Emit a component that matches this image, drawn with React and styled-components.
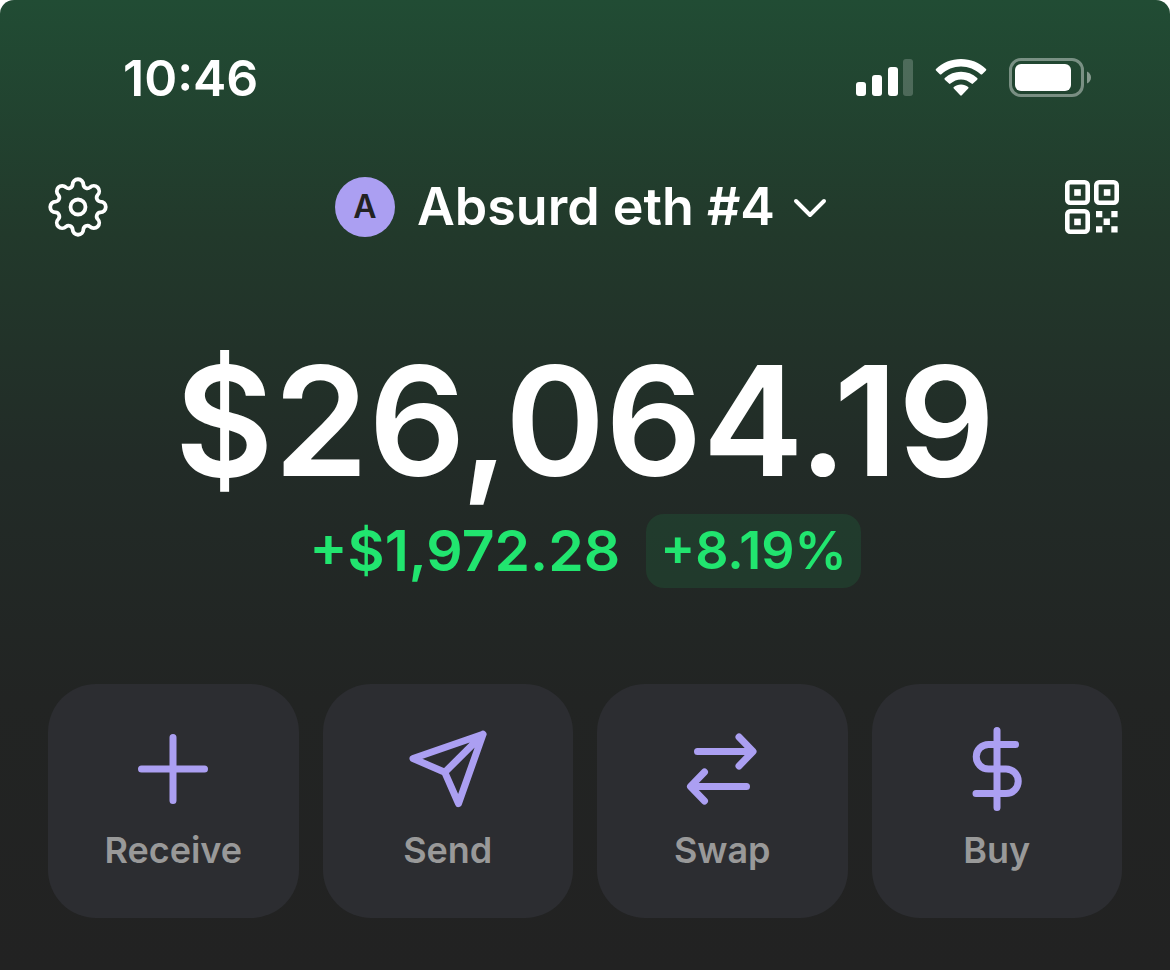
import React from "react";
import styled, { createGlobalStyle } from "styled-components";

const LILAC = "#ab9ff2";
const GREEN = "#21e56f";

// eight rounded teeth, each one tooth arc followed by one valley arc
const gearPath = () => {
  const radius = 23;
  const half = 13.57;
  const point = (deg) => {
    const a = (deg * Math.PI) / 180;
    return `${(radius * Math.sin(a)).toFixed(2)} ${(-radius * Math.cos(a)).toFixed(2)}`;
  };
  let d = `M${point(-half)}`;
  for (let i = 0; i < 8; i++) {
    d += `A5.4 5.4 0 0 1 ${point(i * 45 + half)}`;
    d += `A4 4 0 0 0 ${point((i + 1) * 45 - half)}`;
  }
  return d + "Z";
};

const SignalIcon = () => (
  <svg width="58" height="40" viewBox="0 0 58 40" fill="#fff" aria-hidden="true">
    <rect x="1" y="24" width="10" height="14" rx="3" />
    <rect x="17" y="17" width="10" height="21" rx="3" />
    <rect x="33" y="9" width="10" height="29" rx="3" />
    <rect x="48" y="1" width="10" height="37" rx="3" opacity="0.2" />
  </svg>
);

const WifiIcon = () => (
  <svg width="52" height="40" viewBox="0 0 52 40" fill="#fff" aria-hidden="true">
    <path d="M26 1C35.5 1 44.5 4.5 51 11Q51.7 11.7 51 12.4L47.2 16.2Q46.4 17 45.6 16.2C40.3 11.2 33.4 8.4 26 8.4S11.7 11.2 6.4 16.2Q5.600 17 4.8 16.2L1 12.4Q.3 11.7 1 11C7.5 4.5 16.5 1 26 1Z" />
    <path d="M26 13.8C32 13.8 37.7 16 42.2 20.1Q43 20.9 42.2 21.7L38 25.6Q37.3 26.2 36.5 25.5C33.5 23 29.9 21.4 26 21.4S18.5 23 15.5 25.5Q14.7 26.2 14 25.6L9.8 21.7Q9 20.9 9.8 20.1C14.3 16 20 13.8 26 13.8Z" />
    <path d="M26 26.5C28.8 26.5 31.3 27.5 33.2 29.1Q34 29.8 33.2 30.6L26.8 37.3Q26 38 25.2 37.3L18.8 30.6Q18 29.8 18.8 29.1C20.7 27.5 23.2 26.5 26 26.5Z" />
  </svg>
);

const BatteryIcon = () => (
  <svg width="82" height="40" viewBox="0 0 82 40" aria-hidden="true">
    <rect x="1.5" y="1.5" width="72" height="36" rx="10.5" fill="none" stroke="#fff" strokeOpacity="0.4" strokeWidth="3" />
    <rect x="6" y="6" width="56" height="27" rx="6" fill="#fff" />
    <path d="M78 13.5C80.5 14.6 82 16.9 82 19.5S80.5 24.4 78 25.5Z" fill="#fff" fillOpacity="0.45" />
  </svg>
);

const GearIcon = () => (
  <svg width="60" height="60" viewBox="-30 -30 60 60" fill="none" stroke="#fff" strokeWidth="3.8" aria-hidden="true">
    <path d={gearPath()} />
    <circle r="7.5" />
  </svg>
);

const QrIcon = () => (
  <svg width="60" height="60" viewBox="0 0 60 60" fill="#fff" aria-hidden="true">
    <g fill="none" stroke="#fff" strokeWidth="4.6">
      <rect x="5.3" y="5.3" width="20.4" height="20.4" rx="3" />
      <rect x="34.3" y="5.3" width="20.4" height="20.4" rx="3" />
      <rect x="5.3" y="34.3" width="20.4" height="20.4" rx="3" />
    </g>
    <rect x="12.2" y="12.2" width="6.6" height="6.6" />
    <rect x="41.8" y="12.2" width="6.6" height="6.6" />
    <rect x="12.2" y="41.6" width="6.6" height="6.600" />
    <path d="M34 34h6.3v6.3h-6.3zM49.300 34h6.3v6.3h-6.3zM41.600 41.600h6.3v6.3h-6.3zM34 49.300h6.3v6.3h-6.3zM49.300 49.300h6.3v6.3h-6.3z" />
  </svg>
);

const ChevronIcon = () => (
  <svg width="42" height="40" viewBox="0 0 42 40" fill="none" stroke="#fff" strokeWidth="4" strokeLinecap="round" strokeLinejoin="round" aria-hidden="true">
    <path d="M3 14L17 28L31 14" />
  </svg>
);

const actions = [
  { label: "Receive", path: "M45 13.5V76.5M13.5 45H76.5" },
  { label: "Send", path: "M80 10.3L10 34.5L41.8 48.3L55.5 79.5ZM80 10.3L41.8 48.3" },
  {
    label: "Swap",
    path: "M20.5 27.5H75.5M62 13L76 27.5L62 42M69.5 62.5H14.5M27.5 48L13.5 62.5L27.5 77",
  },
  {
    label: "Buy",
    path: "M45 6.5V83.500M63.5 20.5H36.5A12.2 12.2 0 0 0 36.5 45H54A12.2 12.2 0 0 1 54 69.5H24",
  },
];

export default function App() {
  return (
    <>
      <GlobalStyle />
      <Screen>
        <StatusBar>
          <Time>10:46</Time>
          <StatusIcons>
            <SignalIcon />
            <WifiIcon />
            <BatteryIcon />
          </StatusIcons>
        </StatusBar>
        <Header>
          <PlainButton aria-label="Settings">
            <GearIcon />
          </PlainButton>
          <AccountButton>
            <Avatar>A</Avatar>
            <AccountName>Absurd eth #4</AccountName>
            <ChevronIcon />
          </AccountButton>
          <PlainButton aria-label="Scan QR code">
            <QrIcon />
          </PlainButton>
        </Header>
        <Balance>$26,064.19</Balance>
        <Change>
          <Amount>+$1,972.28</Amount>
          <Percent>+8.19%</Percent>
        </Change>
        <Actions>
          {actions.map(({ label, path }) => (
            <ActionButton key={label}>
              <svg width="90" height="90" viewBox="0 0 90 90" aria-hidden="true">
                <path d={path} />
              </svg>
              <span>{label}</span>
            </ActionButton>
          ))}
        </Actions>
      </Screen>
    </>
  );
}

const GlobalStyle = createGlobalStyle`
  * {
    box-sizing: border-box;
  }
  body {
    margin: 0;
    background: #fff;
    font-family: Inter, "Liberation Sans", sans-serif;
  }
  button {
    font-family: inherit;
  }
  svg {
    display: block;
    flex-shrink: 0;
  }
`;

const Screen = styled.main`
  min-height: 100vh;
  padding: 48px 48px 52px;
  border-radius: 14px 14px 0 0;
  color: #fff;
  background: linear-gradient(#214c34 0%, #22392b 24%, #222b27 48%, #222423 72%, #222222 100%);
`;

const StatusBar = styled.div`
  display: flex;
  align-items: center;
  justify-content: space-between;
  height: 60px;
  padding: 0 31px 0 75px;
`;

const Time = styled.time`
  font-size: 50px;
  font-weight: 600;
  line-height: 60px;
`;

const StatusIcons = styled.div`
  display: flex;
  align-items: center;
  gap: 22px;
`;

const Header = styled.header`
  display: flex;
  align-items: center;
  justify-content: space-between;
  margin-top: 69px;
`;

const PlainButton = styled.button`
  padding: 0;
  border: 0;
  color: inherit;
  background: none;
  cursor: pointer;
`;

const AccountButton = styled(PlainButton)`
  display: flex;
  align-items: center;
`;

const Avatar = styled.span`
  width: 60px;
  height: 60px;
  border-radius: 50%;
  color: #222222;
  background: ${LILAC};
  font-size: 32px;
  font-weight: 600;
  line-height: 60px;
  text-align: center;
`;

const AccountName = styled.span`
  margin: 0 18px 0 22px;
  font-size: 52px;
  font-weight: 600;
  line-height: 60px;
`;

const Balance = styled.h1`
  margin: 94px 0 0;
  font-size: 152px;
  font-weight: 600;
  line-height: 180px;
  text-align: center;
`;

const Change = styled.div`
  display: flex;
  align-items: center;
  justify-content: center;
  gap: 26px;
  margin-top: 3px;
`;

const Amount = styled.span`
  color: ${GREEN};
  font-size: 57px;
  font-weight: 600;
  line-height: 74px;
`;

const Percent = styled.span`
  padding: 0 14px;
  border-radius: 18px;
  color: ${GREEN};
  background: rgba(33, 229, 111, 0.1);
  font-size: 52px;
  font-weight: 600;
  line-height: 74px;
`;

const Actions = styled.nav`
  display: grid;
  grid-template-columns: repeat(4, 1fr);
  gap: 24px;
  margin-top: 96px;
`;

const ActionButton = styled.button`
  display: flex;
  flex-direction: column;
  align-items: center;
  gap: 14px;
  padding: 40px 0 46px;
  border: 0;
  border-radius: 48px;
  color: #999999;
  background: #2c2d31;
  font-size: 36px;
  font-weight: 600;
  line-height: 44px;
  cursor: pointer;

  svg {
    fill: none;
    stroke: ${LILAC};
    stroke-width: 7;
    stroke-linecap: round;
    stroke-linejoin: round;
  }
`;
